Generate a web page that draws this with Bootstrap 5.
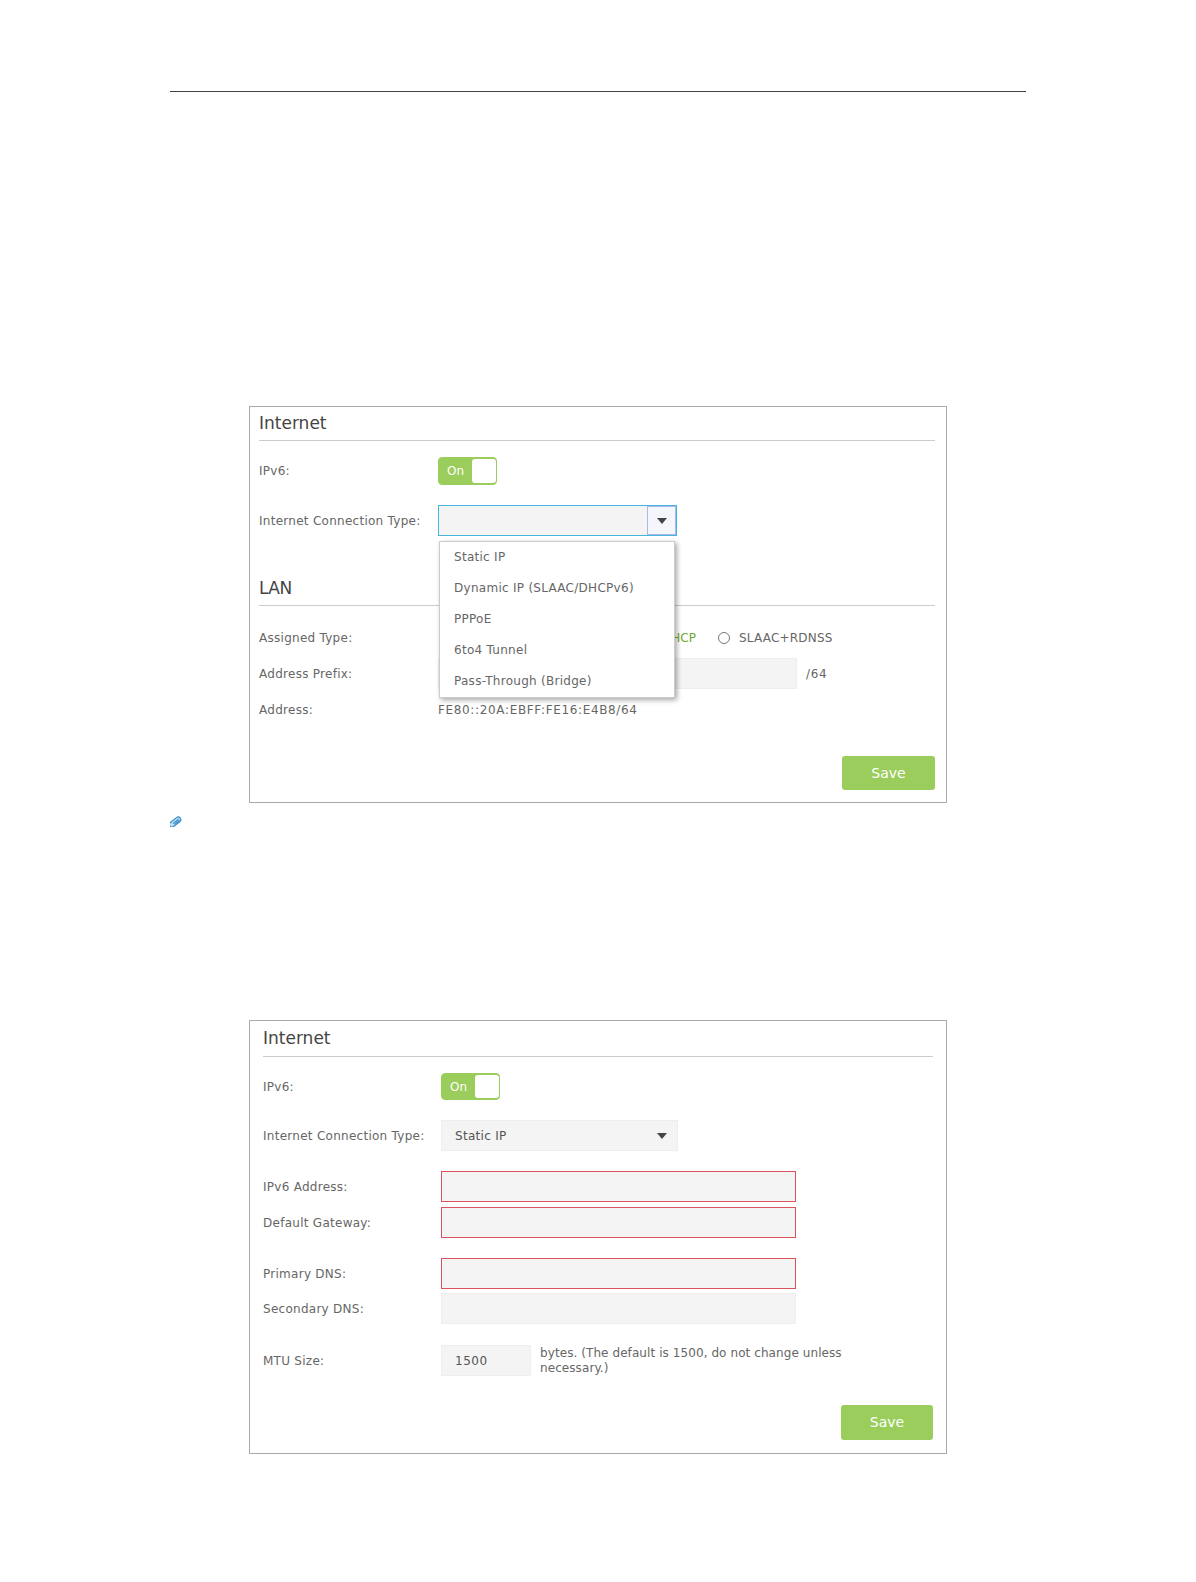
<!DOCTYPE html>
<html lang="en">
<head>
<meta charset="utf-8">
<title>Internet settings</title>
<link href="https://cdn.jsdelivr.net/npm/bootstrap@5.3.0/dist/css/bootstrap.min.css" rel="stylesheet">
<style>
body{background:#fff;font-family:"DejaVu Sans","Liberation Sans",sans-serif;font-size:12px;color:#666;}
.doc-page{padding:91px 0 0 170px;width:1026px;}
.doc-rule{height:1px;background:#444;}
.ui-panel{margin-left:79px;width:698px;border:1px solid #aaa;background:#fff;}
.ui-panel-a{margin-top:314px;padding:0 11px 12px 9px;}
.ui-panel-b{margin-top:193px;padding:0 13px 13px 13px;}
.ui-title{height:34px;border-bottom:1px solid #ccc;font-size:17px;line-height:33px;color:#444;}
.ui-title-lan{line-height:32px;}
.ui-panel-b .ui-title{height:36px;line-height:35px;}
.ui-title-small{letter-spacing:-.5px;}
.ui-label{flex:0 0 179px;letter-spacing:.27px;}
.ui-panel-b .ui-label{flex-basis:178px;}
.ui-line{min-height:30px;}
.ui-toggle{width:59px;height:28px;background:#9acd5c;border:1px solid #9acd5c;border-radius:4px;color:#fff;padding-left:8px;}
.ui-panel-b .ui-toggle{height:27px;}
.ui-knob{width:24px;height:calc(100% - 2px);background:#fff;border-radius:3px;}
.ui-field{background:#f4f4f4;border:1px solid #eee;height:31px;border-radius:0;padding:0 13px;color:#555;font-size:12px;font-family:inherit;box-shadow:none;letter-spacing:.3px;}
.ui-bad{border-color:#d9535f;}
.ui-select{width:237px;padding-right:10px;}
.ui-select-open{width:239px;border-color:#46b4dd;padding:0;}
.ui-arrow-box{width:29px;height:29px;margin-left:auto;background:#f4f6fb;border:1px solid #a9b9e8;}
.ui-arrow{width:0;height:0;border-left:5px solid transparent;border-right:5px solid transparent;border-top:6px solid #444;}
.ui-wide{width:355px;}
.ui-prefix{width:359px;}
.ui-mtu{width:90px;letter-spacing:.5px;}
.ui-menu{position:absolute;left:1px;top:36px;width:236px;height:157px;padding:0;margin:0;border:1px solid #ccc;border-radius:0;box-shadow:2px 2px 5px rgba(0,0,0,.35);z-index:5;display:block;font-size:12px;}
.ui-menu-item{height:31px;padding:0 14px 1px;color:#666;display:flex;align-items:center;letter-spacing:.28px;}
.ui-anchor{position:relative;}
.ui-save{background:#9acd5c;color:#fff;border:0;border-radius:3px;width:93px;height:34px;font-size:14px;padding:0;}
.ui-save:hover{background:#9acd5c;color:#fff;}
.ui-panel-b .ui-save{width:92px;height:35px;}
.ui-radio{width:12px;height:12px;border:1px solid #777;border-radius:50%;margin-left:22px;}
.ui-green{color:#6ea832;}
.ui-spread{width:258px;}
.ui-radio-text{margin-left:9px;letter-spacing:.2px;}
.ui-clip{display:block;margin-top:13px;}
.gap-t4{margin-top:4px;}.gap-t5{margin-top:5px;}.gap-t6{margin-top:6px;}.gap-t16{margin-top:16px;}.gap-t17{margin-top:17px;}.gap-t20{margin-top:20px;}.gap-t21{margin-top:21px;}.gap-t29{margin-top:29px;}.gap-t31{margin-top:31px;}.gap-t36{margin-top:36px;}
.ui-note{margin-left:9px;width:320px;line-height:15px;letter-spacing:.08px;}
.ui-suffix{margin-left:9px;letter-spacing:.6px;}
.ui-addr{letter-spacing:.65px;}
</style>
</head>
<body>
<div class="doc-page">
  <div class="doc-rule"></div>

  <section class="ui-panel ui-panel-a">
    <div class="ui-title">Internet</div>
    <div class="d-flex align-items-center gap-t16">
      <div class="ui-label">IPv6:</div>
      <div class="ui-toggle d-flex align-items-center justify-content-between"><span>On</span><span class="ui-knob"></span></div>
    </div>
    <div class="d-flex align-items-center gap-t20">
      <div class="ui-label">Internet Connection Type:</div>
      <div class="ui-anchor">
        <div class="ui-field ui-select-open d-flex align-items-center">
          <span class="ui-arrow-box d-flex align-items-center justify-content-center"><span class="ui-arrow"></span></span>
        </div>
        <div class="dropdown-menu ui-menu">
          <div class="ui-menu-item">Static IP</div>
          <div class="ui-menu-item">Dynamic IP (SLAAC/DHCPv6)</div>
          <div class="ui-menu-item">PPPoE</div>
          <div class="ui-menu-item">6to4 Tunnel</div>
          <div class="ui-menu-item">Pass-Through (Bridge)</div>
        </div>
      </div>
    </div>
    <div class="ui-title ui-title-lan gap-t36"><span class="ui-title-small">LAN</span></div>
    <div class="d-flex align-items-center ui-line gap-t17">
      <div class="ui-label">Assigned Type:</div>
      <div class="ui-spread d-flex justify-content-end ui-green">DHCP</div>
      <span class="ui-radio"></span>
      <span class="ui-radio-text">SLAAC+RDNSS</span>
    </div>
    <div class="d-flex align-items-center gap-t5">
      <div class="ui-label">Address Prefix:</div>
      <input class="form-control ui-field ui-prefix" aria-label="Address Prefix">
      <span class="ui-suffix">/64</span>
    </div>
    <div class="d-flex align-items-center ui-line gap-t6">
      <div class="ui-label">Address:</div>
      <div class="ui-addr">FE80::20A:EBFF:FE16:E4B8/64</div>
    </div>
    <div class="d-flex justify-content-end gap-t31"><button type="button" class="btn ui-save">Save</button></div>
  </section>

  <svg class="ui-clip" width="12" height="11" viewBox="0 0 12 11" aria-hidden="true">
    <g fill="none" stroke="#2f86c9" stroke-width="1.1">
      <rect x="-1.6" y="2.8" width="13" height="5.2" rx="2.6" transform="rotate(-38 6 5.5)" fill="#bfe0f5"/>
      <path d="M3 7.6 8.6 3.2M4.6 8.4 9.6 4.4"/>
    </g>
  </svg>

  <section class="ui-panel ui-panel-b">
    <div class="ui-title">Internet</div>
    <div class="d-flex align-items-center gap-t16">
      <div class="ui-label">IPv6:</div>
      <div class="ui-toggle d-flex align-items-center justify-content-between"><span>On</span><span class="ui-knob"></span></div>
    </div>
    <div class="d-flex align-items-center gap-t20">
      <div class="ui-label">Internet Connection Type:</div>
      <div class="ui-field ui-select d-flex align-items-center justify-content-between">
        <span>Static IP</span><span class="ui-arrow"></span>
      </div>
    </div>
    <div class="d-flex align-items-center gap-t20">
      <div class="ui-label">IPv6 Address:</div>
      <input class="form-control ui-field ui-bad ui-wide" aria-label="IPv6 Address">
    </div>
    <div class="d-flex align-items-center gap-t5">
      <div class="ui-label">Default Gateway:</div>
      <input class="form-control ui-field ui-bad ui-wide" aria-label="Default Gateway">
    </div>
    <div class="d-flex align-items-center gap-t20">
      <div class="ui-label">Primary DNS:</div>
      <input class="form-control ui-field ui-bad ui-wide" aria-label="Primary DNS">
    </div>
    <div class="d-flex align-items-center gap-t4">
      <div class="ui-label">Secondary DNS:</div>
      <input class="form-control ui-field ui-wide" aria-label="Secondary DNS">
    </div>
    <div class="d-flex align-items-center gap-t21">
      <div class="ui-label">MTU Size:</div>
      <input class="form-control ui-field ui-mtu" value="1500" aria-label="MTU Size">
      <div class="ui-note">bytes. (The default is 1500, do not change unless necessary.)</div>
    </div>
    <div class="d-flex justify-content-end gap-t29"><button type="button" class="btn ui-save">Save</button></div>
  </section>
</div>
<script src="https://cdn.jsdelivr.net/npm/bootstrap@5.3.0/dist/js/bootstrap.bundle.min.js"></script>
</body>
</html>
